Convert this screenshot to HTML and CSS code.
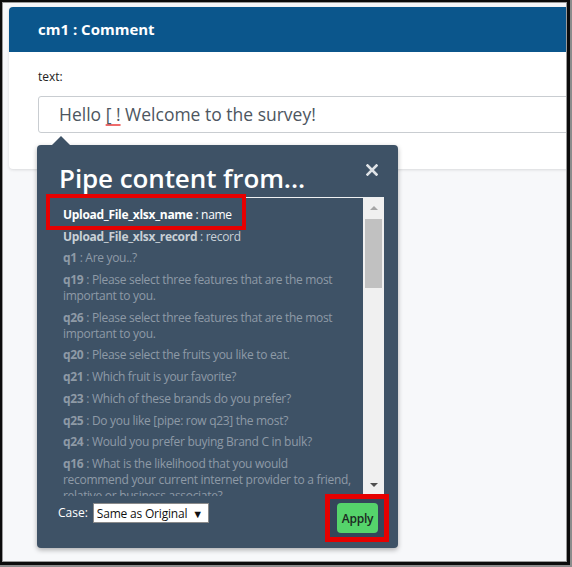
FILE: index.html
```html
<!DOCTYPE html>
<html lang="en">
<head>
  <meta charset="UTF-8">
  <meta name="viewport" content="width=device-width, initial-scale=1.0">
  <title>cm1 : Comment</title>
  <link rel="stylesheet" href="styles.css">
</head>
<body>
  <div class="shot">
    <div class="frame">
      <div class="screen">
        <section class="card">
          <header class="card-head">cm1 : Comment</header>
          <div class="card-body">
            <div class="field-label">text:</div>
            <div class="text-input">Hello <span class="misspelt">[ !</span> Welcome to the survey!</div>
          </div>
        </section>

        <div class="pipe-pop">
          <div class="pop-head">
            <h2 class="pop-title">Pipe content from...</h2>
            <button class="pop-close" title="Close">
              <svg width="12" height="12" viewBox="0 0 12 12">
                <path d="M1.5 1.5 L10.5 10.5 M10.5 1.5 L1.5 10.5" stroke="#dfe3e7" stroke-width="2.6" stroke-linecap="square"/>
              </svg>
            </button>
          </div>
          <div class="pipe-box">
            <ul class="pipe-list">
              <li class="pipe-item is-current"><b>Upload_File_xlsx_name</b> : name</li>
              <li class="pipe-item is-near"><b>Upload_File_xlsx_record</b> : record</li>
              <li class="pipe-item"><b>q1</b> : Are you..?</li>
              <li class="pipe-item"><b>q19</b> : Please select three features that are the most important to you.</li>
              <li class="pipe-item"><b>q26</b> : Please select three features that are the most important to you.</li>
              <li class="pipe-item"><b>q20</b> : Please select the fruits you like to eat.</li>
              <li class="pipe-item"><b>q21</b> : Which fruit is your favorite?</li>
              <li class="pipe-item"><b>q23</b> : Which of these brands do you prefer?</li>
              <li class="pipe-item"><b>q25</b> : Do you like [pipe: row q23] the most?</li>
              <li class="pipe-item"><b>q24</b> : Would you prefer buying Brand C in bulk?</li>
              <li class="pipe-item"><b>q16</b> : What is the likelihood that you would recommend your current internet provider to a friend, relative or business associate?</li>
            </ul>
            <div class="scrollbar">
              <span class="sb-btn"><span class="sb-up"></span></span>
              <span class="sb-thumb"></span>
              <span class="sb-btn sb-btn-end"><span class="sb-down"></span></span>
            </div>
          </div>
          <div class="pop-foot">
            <span class="case-label">Case:</span>
            <div class="case-select">Same as Original <span class="caret">&#9660;</span></div>
            <div class="apply-mark"><button class="apply-btn">Apply</button></div>
          </div>
          <div class="pick-mark"></div>
        </div>
      </div>
    </div>
  </div>
</body>
</html>
```

FILE: styles.css
```css
body {
  margin: 0;
  font-family: "Open Sans", "Noto Sans", Arial, sans-serif;
  background: #8c8c8c;
}
.shot {
  width: 572px;
  height: 567px;
  box-sizing: border-box;
  border-right: 2px solid #8c8c8c;
  border-bottom: 2px solid #8c8c8c;
}
.frame {
  height: 100%;
  box-sizing: border-box;
  border-style: solid;
  border-color: #0c0c0c;
  border-width: 2px 3px 3px 2px;
}
.screen {
  position: relative;
  height: 100%;
  box-sizing: border-box;
  border: 1px solid #9a9a9a;
  background: #f7f8fa;
  overflow: hidden;
}

/* question card */
.card {
  width: 600px;
  margin: 4px 0 0 6px;
  background: #fff;
  border-radius: 4px;
  box-shadow: 0 1px 3px rgba(0, 0, 0, 0.12);
  overflow: hidden;
}
.card-head {
  height: 45px;
  padding-left: 29px;
  background: #0b568c;
  color: #fff;
  font-weight: 700;
  font-size: 15px;
  line-height: 45px;
}
.card-body {
  padding: 16px 29px 36px;
}
.field-label {
  font-size: 12px;
  line-height: 18px;
  color: #222;
  margin-bottom: 10px;
}
.text-input {
  height: 37px;
  box-sizing: border-box;
  border: 1px solid #c9cdd1;
  border-radius: 3px;
  padding-left: 20px;
  font-size: 17.5px;
  line-height: 35px;
  color: #4d5660;
}
.misspelt {
  text-decoration: underline;
  text-decoration-color: #ef6b6b;
  text-decoration-thickness: 2px;
  text-underline-offset: 3px;
}

/* pipe popover */
.pipe-pop {
  position: absolute;
  left: 34px;
  top: 142px;
  width: 361px;
  height: 403px;
  background: #3e5266;
  border-radius: 4px;
  box-shadow: 0 2px 5px rgba(0, 0, 0, 0.3);
}
.pipe-pop::before {
  content: "";
  position: absolute;
  left: 15px;
  top: -9px;
  border-left: 9px solid transparent;
  border-right: 9px solid transparent;
  border-bottom: 9px solid #3e5266;
}
.pop-head {
  display: flex;
  height: 52px;
  box-sizing: border-box;
  padding: 17px 20px 0 22px;
}
.pop-title {
  margin: 0;
  font-size: 26px;
  font-weight: 600;
  line-height: 32px;
  letter-spacing: -0.1px;
  color: #fff;
}
.pop-close {
  margin: 2px 0 0 auto;
  padding: 0;
  width: 12px;
  height: 12px;
  border: none;
  background: none;
  align-self: flex-start;
}
.pop-close svg {
  display: block;
}

.pipe-box {
  display: flex;
  height: 299px;
  box-sizing: border-box;
  margin: 0 14px 0 10px;
  border-top: 1px solid #eef0f2;
}
.pipe-list {
  flex: 1;
  margin: 0;
  padding: 9px 9px 0 16px;
  list-style: none;
  overflow: hidden;
}
.pipe-item {
  position: relative;
  margin-bottom: 5.7px;
  font-size: 12px;
  line-height: 16px;
  letter-spacing: -0.3px;
  color: #8e9aa6;
}
.pipe-item b {
  font-weight: 700;
}
.pipe-item.is-current {
  color: #fff;
}
.pipe-item.is-current::before {
  content: "";
  position: absolute;
  left: -13px;
  top: -9px;
  width: 192px;
  height: 28px;
  background: #35475a;
  z-index: -1;
}
.pipe-item.is-near {
  color: #c9d0d6;
}

.scrollbar {
  display: flex;
  flex-direction: column;
  width: 21px;
  height: 296px;
  background: #f0f0f0;
}
.sb-btn {
  display: flex;
  align-items: center;
  justify-content: center;
  height: 20px;
}
.sb-btn-end {
  margin-top: auto;
  height: 18px;
}
.sb-up {
  border-left: 4px solid transparent;
  border-right: 4px solid transparent;
  border-bottom: 4px solid #a6a6a6;
}
.sb-down {
  border-left: 4px solid transparent;
  border-right: 4px solid transparent;
  border-top: 4px solid #505050;
}
.sb-thumb {
  height: 69px;
  margin: 1px 2px 0;
  background: #c1c1c1;
}

.pop-foot {
  display: flex;
  align-items: flex-start;
  padding-left: 21px;
}
.case-label {
  margin-top: 9px;
  font-size: 12px;
  line-height: 16px;
  color: #fff;
}
.case-select {
  display: flex;
  align-items: center;
  width: 116px;
  height: 20px;
  box-sizing: border-box;
  margin: 7px 0 0 5px;
  padding: 0 5px 0 3px;
  border: 1px solid #8a8a8a;
  background: #fff;
  font-size: 12px;
  letter-spacing: -0.2px;
  white-space: nowrap;
  color: #111;
}
.caret {
  margin-left: auto;
  font-size: 11px;
}
.apply-mark {
  margin: -2px 9px 0 auto;
  padding: 4px 6px 4px 7px;
  border: 5px solid #e60000;
  background: #34465a;
}
.apply-btn {
  display: block;
  width: 41px;
  height: 30px;
  padding: 0;
  border: none;
  border-radius: 4px;
  background: #55d46b;
  color: #1c2a22;
  font-family: inherit;
  font-size: 12px;
  font-weight: 600;
  letter-spacing: -0.2px;
}

/* highlight around the chosen source */
.pick-mark {
  position: absolute;
  left: 9px;
  top: 49px;
  width: 200px;
  height: 36px;
  box-sizing: border-box;
  border: 4px solid #e60000;
}
```
